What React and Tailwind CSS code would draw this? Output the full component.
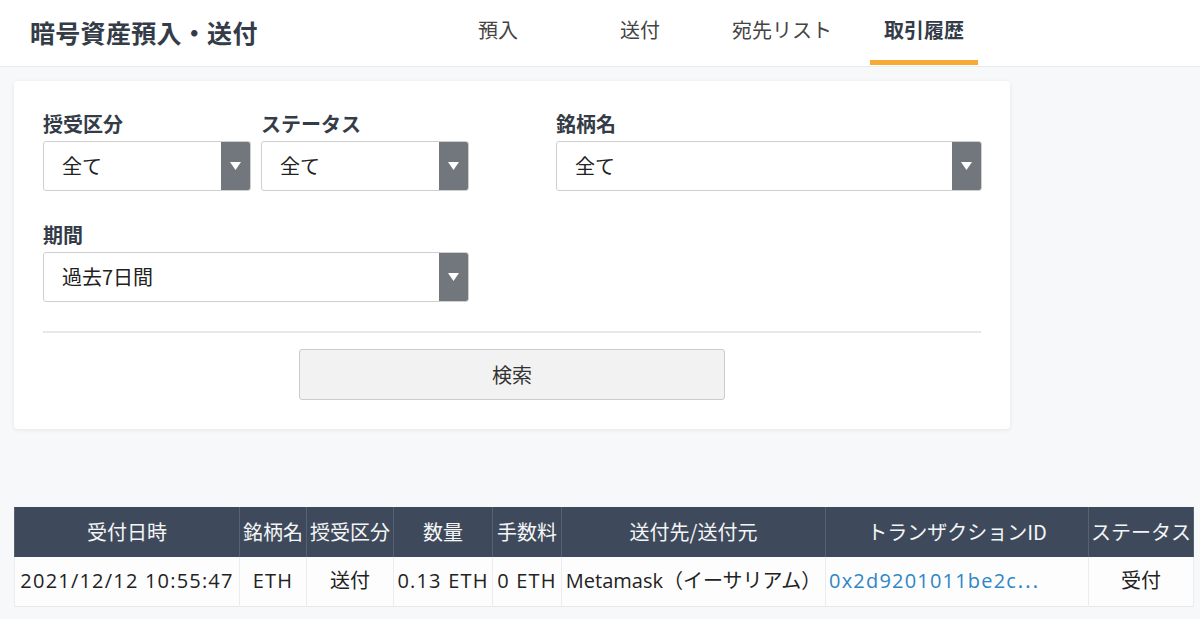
import React from "react";

const FONT = { fontFamily: '"Noto Sans CJK JP", "Noto Sans", sans-serif' };
const ROWFONT = { fontFamily: '"Open Sans", "Noto Sans CJK JP", sans-serif' };

function Arrow() {
  return (
    <div className="w-[29px] self-stretch bg-[#72777e] flex items-center justify-center">
      <svg width="11" height="8" viewBox="0 0 11 8">
        <polygon points="0,0 11,0 5.5,8" fill="#ffffff" />
      </svg>
    </div>
  );
}

function Field({ label, value, className }) {
  return (
    <div className={"flex flex-col " + (className || "")}>
      <div className="h-[28px] leading-[28px] text-[20px] font-bold text-[#333c47] mb-[3px]">{label}</div>
      <div className="h-[50px] flex border border-[#cfcfcf] rounded-[3px] overflow-hidden bg-white">
        <div className="flex-1 flex items-center pl-[18px] text-[20px] text-[#222]">{value}</div>
        <Arrow />
      </div>
    </div>
  );
}

const cols = [
  ["受付日時", 225, "2021/12/12 10:55:47", true],
  ["銘柄名", 67, "ETH", true],
  ["授受区分", 87, "送付", false],
  ["数量", 99, "0.13 ETH", true],
  ["手数料", 69, "0 ETH", true],
  ["送付先/送付元", 264, "Metamask（イーサリアム）", false],
  ["トランザクションID", 263, "0x2d9201011be2c⋯", true],
  ["ステータス", 105, "受付", false],
];

export default function App() {
  return (
    <div className="w-[1200px] h-[619px] bg-[#f7f8fa] overflow-hidden" style={FONT}>
      <header className="h-[67px] bg-white border-b border-[#e9eaec] flex items-stretch pl-[30px]">
        <div className="w-[397px] flex items-center text-[25px] font-bold text-[#333c47] tracking-[0.3px]">
          暗号資産預入・送付
        </div>
        <nav className="flex">
          {["預入", "送付", "宛先リスト", "取引履歴"].map((t, i) => {
            const active = i === 3;
            return (
              <div key={t} className="w-[142px] flex flex-col items-center">
                <div className={"flex-1 flex items-center text-[20px] " + (active ? "font-bold text-[#333c47]" : "text-[#444]")}>
                  {t}
                </div>
                <div className={"w-[108px] h-[5px] mb-[1px] " + (active ? "bg-[#f5ab35]" : "")} />
              </div>
            );
          })}
        </nav>
      </header>

      <div className="ml-[14px] mt-[14px] w-[996px] bg-white rounded-[4px] shadow-[0_1px_4px_rgba(0,0,0,0.08)] px-[29px] pt-[29px] pb-[29px]">
        <div className="flex gap-[87px]">
          <div className="w-[426px] flex flex-col gap-[30px]">
            <div className="flex gap-[10px]">
              <Field label="授受区分" value="全て" className="w-[208px]" />
              <Field label="ステータス" value="全て" className="w-[208px]" />
            </div>
            <Field label="期間" value="過去7日間" className="w-[426px]" />
          </div>
          <div className="w-[426px] flex flex-col">
            <Field label="銘柄名" value="全て" className="w-[426px]" />
          </div>
        </div>
        <div className="mt-[29px] h-[2px] bg-[#e8e8e8]" />
        <div className="mt-[16px] flex justify-center">
          <div className="w-[426px] h-[51px] flex items-center justify-center bg-[#f2f2f2] border border-[#cccccc] rounded-[3px] text-[20px] text-[#333]">
            検索
          </div>
        </div>
      </div>

      <table className="ml-[14px] mt-[78px] border-collapse table-fixed w-[1179px]">
        <colgroup>
          {cols.map(([h, w]) => (
            <col key={h} style={{ width: w }} />
          ))}
        </colgroup>
        <thead>
          <tr className="h-[50px] bg-[#3e4a5b]">
            {cols.map(([h]) => (
              <th key={h} className="text-[20px] font-normal text-[#f4f5f6] text-center border-x border-[#56626f] whitespace-nowrap p-0 overflow-hidden">
                {h}
              </th>
            ))}
          </tr>
        </thead>
        <tbody>
          <tr className="h-[49px] bg-[#fdfdfd] border-b border-[#e8e8e8]" style={ROWFONT}>
            {cols.map(([h, , v, latin], i) => (
              <td
                key={h}
                className={
                  "text-[20px] whitespace-nowrap border-x border-[#ececec] p-0 overflow-hidden " +
                  (latin ? "tracking-[1.2px] " : "") +
                  (i === 6 ? "text-left pl-[3px] text-[#2f86c6]" : "text-center text-[#222]")
                }
              >
                {v}
              </td>
            ))}
          </tr>
        </tbody>
      </table>
    </div>
  );
}
